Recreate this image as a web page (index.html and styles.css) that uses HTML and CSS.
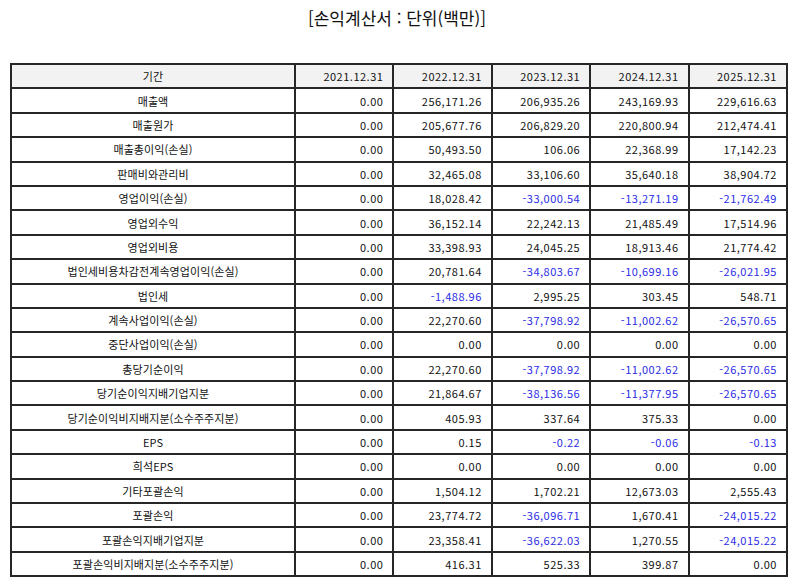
FILE: index.html
```html
<!DOCTYPE html>
<html lang="ko">
<head>
<meta charset="utf-8">
<link rel="stylesheet" href="styles.css">
</head>
<body>
<div class="page">
  <h1 class="title">[손익계산서 : 단위(백만)]</h1>
  <table class="fin">
    <colgroup>
      <col class="c-label">
      <col class="c-num"><col class="c-num"><col class="c-num"><col class="c-num"><col class="c-num">
    </colgroup>
    <thead>
      <tr><th class="label">기간</th><th>2021.12.31</th><th>2022.12.31</th><th>2023.12.31</th><th>2024.12.31</th><th>2025.12.31</th></tr>
    </thead>
    <tbody>
      <tr><td class="label">매출액</td><td>0.00</td><td>256,171.26</td><td>206,935.26</td><td>243,169.93</td><td>229,616.63</td></tr>
      <tr><td class="label">매출원가</td><td>0.00</td><td>205,677.76</td><td>206,829.20</td><td>220,800.94</td><td>212,474.41</td></tr>
      <tr><td class="label">매출총이익(손실)</td><td>0.00</td><td>50,493.50</td><td>106.06</td><td>22,368.99</td><td>17,142.23</td></tr>
      <tr><td class="label">판매비와관리비</td><td>0.00</td><td>32,465.08</td><td>33,106.60</td><td>35,640.18</td><td>38,904.72</td></tr>
      <tr><td class="label">영업이익(손실)</td><td>0.00</td><td>18,028.42</td><td class="neg">-33,000.54</td><td class="neg">-13,271.19</td><td class="neg">-21,762.49</td></tr>
      <tr><td class="label">영업외수익</td><td>0.00</td><td>36,152.14</td><td>22,242.13</td><td>21,485.49</td><td>17,514.96</td></tr>
      <tr><td class="label">영업외비용</td><td>0.00</td><td>33,398.93</td><td>24,045.25</td><td>18,913.46</td><td>21,774.42</td></tr>
      <tr><td class="label">법인세비용차감전계속영업이익(손실)</td><td>0.00</td><td>20,781.64</td><td class="neg">-34,803.67</td><td class="neg">-10,699.16</td><td class="neg">-26,021.95</td></tr>
      <tr><td class="label">법인세</td><td>0.00</td><td class="neg">-1,488.96</td><td>2,995.25</td><td>303.45</td><td>548.71</td></tr>
      <tr><td class="label">계속사업이익(손실)</td><td>0.00</td><td>22,270.60</td><td class="neg">-37,798.92</td><td class="neg">-11,002.62</td><td class="neg">-26,570.65</td></tr>
      <tr><td class="label">중단사업이익(손실)</td><td>0.00</td><td>0.00</td><td>0.00</td><td>0.00</td><td>0.00</td></tr>
      <tr><td class="label">총당기순이익</td><td>0.00</td><td>22,270.60</td><td class="neg">-37,798.92</td><td class="neg">-11,002.62</td><td class="neg">-26,570.65</td></tr>
      <tr><td class="label">당기순이익지배기업지분</td><td>0.00</td><td>21,864.67</td><td class="neg">-38,136.56</td><td class="neg">-11,377.95</td><td class="neg">-26,570.65</td></tr>
      <tr><td class="label">당기순이익비지배지분(소수주주지분)</td><td>0.00</td><td>405.93</td><td>337.64</td><td>375.33</td><td>0.00</td></tr>
      <tr><td class="label">EPS</td><td>0.00</td><td>0.15</td><td class="neg">-0.22</td><td class="neg">-0.06</td><td class="neg">-0.13</td></tr>
      <tr><td class="label">희석EPS</td><td>0.00</td><td>0.00</td><td>0.00</td><td>0.00</td><td>0.00</td></tr>
      <tr><td class="label">기타포괄손익</td><td>0.00</td><td>1,504.12</td><td>1,702.21</td><td>12,673.03</td><td>2,555.43</td></tr>
      <tr><td class="label">포괄손익</td><td>0.00</td><td>23,774.72</td><td class="neg">-36,096.71</td><td>1,670.41</td><td class="neg">-24,015.22</td></tr>
      <tr><td class="label">포괄손익지배기업지분</td><td>0.00</td><td>23,358.41</td><td class="neg">-36,622.03</td><td>1,270.55</td><td class="neg">-24,015.22</td></tr>
      <tr><td class="label">포괄손익비지배지분(소수주주지분)</td><td>0.00</td><td>416.31</td><td>525.33</td><td>399.87</td><td>0.00</td></tr>
    </tbody>
  </table>
</div>
</body>
</html>
```
FILE: styles.css
```css
html, body {
  margin: 0;
  padding: 0;
  background: #ffffff;
}
body {
  font-family: "Noto Sans CJK KR", "Noto Sans", sans-serif;
  color: #111111;
}
.page {
  width: 794px;
  padding: 5px 0 0;
}
.title {
  margin: 0;
  height: 58px;
  text-align: center;
  font-size: 17px;
  font-weight: 400;
  line-height: 26px;
  color: #111111;
}
.fin {
  margin-left: 10px;
  width: 776px;
  border-collapse: collapse;
  table-layout: fixed;
  border: 2px solid #1e1e1e;
  font-size: 11px;
}
.c-label { width: 284px; }
.c-num { width: 98.4px; }
.fin th, .fin td {
  border: 2px solid #262626;
  height: 22.4px;
  padding: 0 9px 0 4px;
  text-align: right;
  font-weight: 400;
  white-space: nowrap;
  line-height: 14px;
  letter-spacing: 0.5px;
}
.fin thead th {
  background: #f2f2f2;
}
.fin .label {
  text-align: center;
  padding: 0 4px;
  letter-spacing: 0.1px;
}
.fin .neg {
  color: #2b2be6;
}
```
